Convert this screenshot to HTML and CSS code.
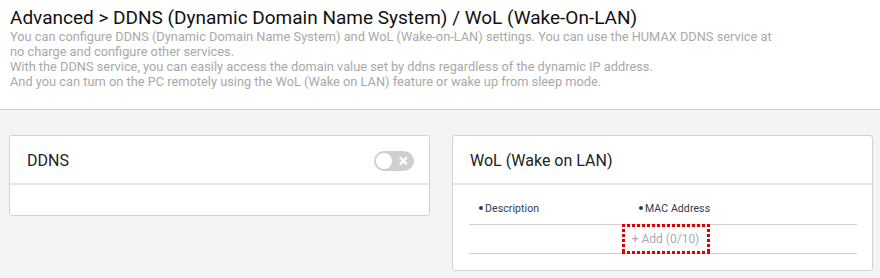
FILE: index.html
```html
<!DOCTYPE html>
<html>
<head>
    <title>Advanced - DDNS / WoL</title>
    <link rel="stylesheet" href="styles.css">
</head>
<body>
    <div class="page-head">
        <h1 class="page-title">Advanced &gt; DDNS (Dynamic Domain Name System) / WoL (Wake-On-LAN)</h1>
        <p class="page-desc">You can configure DDNS (Dynamic Domain Name System) and WoL (Wake-on-LAN) settings. You can use the HUMAX DDNS service at no charge and configure other services.<br>With the DDNS service, you can easily access the domain value set by ddns regardless of the dynamic IP address.<br>And you can turn on the PC remotely using the WoL (Wake on LAN) feature or wake up from sleep mode.</p>
    </div>
    <div class="panels">
        <div class="card">
            <div class="card-head">
                <span class="card-title">DDNS</span>
                <span class="toggle"><span class="knob"></span><span class="cross">&times;</span></span>
            </div>
            <div class="card-body ddns-body"></div>
        </div>
        <div class="card">
            <div class="card-head">
                <span class="card-title">WoL (Wake on LAN)</span>
            </div>
            <div class="card-body wol-body">
                <div class="wol-cols">
                    <span class="col-label">Description</span>
                    <span class="col-label">MAC Address</span>
                </div>
                <div class="wol-add">
                    <button class="btn-add">+ Add (0/10)</button>
                </div>
            </div>
        </div>
    </div>
</body>
</html>
```

FILE: styles.css
```css
body {
    margin: 0;
    padding: 0;
    font-family: Roboto, "Liberation Sans", sans-serif;
    background-color: #f4f4f4;
    height: 278px;
    overflow: hidden;
}
.page-head {
    background-color: #fff;
    border-bottom: 1px solid #cfcfcf;
    padding: 6px 10px 0 10px;
    box-sizing: border-box;
    height: 110px;
}
.page-title {
    margin: 0;
    font-size: 19px;
    font-weight: normal;
    line-height: 23px;
    color: #111;
}
.page-desc {
    margin: 0;
    max-width: 770px;
    font-size: 12.8px;
    line-height: 15px;
    color: #a9a9a9;
}
.panels {
    display: grid;
    grid-template-columns: 421px 421px;
    column-gap: 22px;
    padding: 25px 7px 0 9px;
    align-items: start;
}
.card {
    background-color: #fff;
    border: 1px solid #d2d2d2;
    border-radius: 3px;
}
.card-head {
    height: 49px;
    display: flex;
    align-items: center;
    justify-content: space-between;
    padding: 2px 15px 0 17px;
    box-sizing: border-box;
    border-bottom: 2px solid #e6e6e6;
}
.card-title {
    font-size: 16px;
    color: #222;
}
.toggle {
    position: relative;
    width: 40px;
    height: 20px;
    border-radius: 10px;
    background-color: #cfcfcf;
}
.knob {
    position: absolute;
    left: 2px;
    top: 2px;
    width: 16px;
    height: 16px;
    border-radius: 50%;
    background-color: #fff;
}
.cross {
    position: absolute;
    right: 6px;
    top: 0;
    line-height: 19px;
    font-size: 18px;
    font-weight: bold;
    color: #fff;
}
.ddns-body {
    height: 30px;
}
.wol-body {
    padding: 0 15px 16px 16px;
}
.wol-cols {
    display: grid;
    grid-template-columns: 160px 1fr;
    padding: 17px 10px 0 10px;
    height: 40px;
    box-sizing: border-box;
    border-bottom: 1px solid #cfcfcf;
}
.col-label {
    font-size: 10.5px;
    letter-spacing: 0.1px;
    color: #2f3a4f;
}
.col-label:before {
    content: "";
    display: inline-block;
    width: 4px;
    height: 4px;
    border-radius: 50%;
    background-color: #2f3a4f;
    margin: 0 2px 2px 0;
    vertical-align: middle;
}
.wol-add {
    display: flex;
    justify-content: center;
    align-items: flex-start;
    border-bottom: 1px solid #cfcfcf;
    height: 29px;
    box-sizing: border-box;
}
.btn-add {
    margin: -1px 0 0 5px;
    width: 88px;
    height: 30px;
    border: none;
    background:
        repeating-linear-gradient(to right, #e00000 0 3px, transparent 3px 5px) top left / 100% 3px no-repeat,
        repeating-linear-gradient(to right, #e00000 0 3px, transparent 3px 5px) bottom left / 100% 3px no-repeat,
        repeating-linear-gradient(to bottom, #e00000 0 3px, transparent 3px 5px) top left / 3px 100% no-repeat,
        repeating-linear-gradient(to bottom, #e00000 0 3px, transparent 3px 5px) top right / 3px 100% no-repeat;
    font-family: Roboto, "Liberation Sans", sans-serif;
    font-size: 12px;
    color: #aaa;
    padding: 0;
}
```
